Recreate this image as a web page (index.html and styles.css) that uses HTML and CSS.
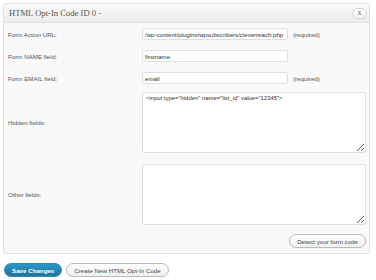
FILE: index.html
```html
<!DOCTYPE html>
<html lang="en">
<head>
  <meta charset="UTF-8">
  <title>HTML Opt-In Code</title>
  <link rel="stylesheet" href="styles.css">
</head>
<body>
  <div class="postbox">
    <div class="postbox-head">
      <h3>HTML Opt-In Code ID 0 -</h3>
      <span class="close-btn">X</span>
    </div>
    <div class="postbox-inside">
      <div class="form-row">
        <label>Form Action URL:</label>
        <div class="field">
          <input type="text" class="text-input" value="/wp-content/plugins/wpsubscribers/cleverreach.php">
          <span class="note">(required)</span>
        </div>
      </div>
      <div class="form-row">
        <label>Form NAME field:</label>
        <div class="field">
          <input type="text" class="text-input" value="firstname">
        </div>
      </div>
      <div class="form-row form-row-last">
        <label>Form EMAIL field:</label>
        <div class="field">
          <input type="text" class="text-input" value="email">
          <span class="note">(required)</span>
        </div>
      </div>
      <div class="form-row form-row-area">
        <label>Hidden fields:</label>
        <div class="field">
          <textarea class="code-area"><input type="hidden" name="list_id" value="12345"></textarea>
        </div>
      </div>
      <div class="form-row">
        <label>Other fields:</label>
        <div class="field">
          <textarea class="code-area"></textarea>
        </div>
      </div>
      <div class="detect-row">
        <button class="button">Detect your form code</button>
      </div>
    </div>
  </div>

  <div class="actions">
    <button class="button button-primary">Save Changes</button>
    <button class="button">Create New HTML Opt-In Code</button>
  </div>
</body>
</html>
```

FILE: styles.css
```css
body {
  margin: 0;
  padding: 3px 6px 0 3px;
  background: #fff;
  font-family: "Liberation Sans", Arial, sans-serif;
  font-size: 6.2px;
  color: #555;
}

.postbox {
  border: 1px solid #dfdfdf;
  border-radius: 3px;
  background: #f9f9f9;
}

.postbox-head {
  display: flex;
  align-items: center;
  justify-content: space-between;
  height: 18px;
  padding: 0 2px 0 5px;
  border-bottom: 1px solid #dfdfdf;
  background: linear-gradient(to bottom, #f9f9f9, #ececec);
}

.postbox-head h3 {
  margin: 0;
  font-family: "Liberation Serif", Georgia, serif;
  font-weight: normal;
  font-size: 8.6px;
  color: #555;
}

.close-btn {
  display: inline-flex;
  align-items: center;
  justify-content: center;
  width: 13px;
  height: 9px;
  border: 1px solid #d4d4d4;
  border-radius: 6px;
  background: linear-gradient(to bottom, #fff, #f0f0f0);
  font-family: "Liberation Serif", Georgia, serif;
  font-size: 6px;
  color: #555;
}

.postbox-inside {
  padding: 5px 3px 5px 4px;
}

.form-row {
  display: grid;
  grid-template-columns: 134px 1fr;
  align-items: center;
  margin-bottom: 10px;
}

.form-row-last {
  margin-bottom: 8px;
}

.form-row-area {
  margin-bottom: 11px;
}

.field {
  display: flex;
  align-items: center;
}

.text-input {
  box-sizing: border-box;
  width: 146px;
  height: 12px;
  margin: 0;
  padding: 0 2px;
  border: 1px solid #dfdfdf;
  border-radius: 2px;
  background: #fff;
  font-family: "Liberation Sans", Arial, sans-serif;
  font-size: 6.1px;
  color: #333;
}

.note {
  margin-left: 5px;
}

.code-area {
  box-sizing: border-box;
  width: 224px;
  height: 61px;
  margin: 0;
  padding: 2px 3px;
  border: 1px solid #dfdfdf;
  border-radius: 2px;
  background: #fff;
  font-family: "Liberation Sans", Arial, sans-serif;
  font-size: 5.9px;
  color: #333;
}

.detect-row {
  display: flex;
  justify-content: flex-end;
  margin-top: -1px;
}

.button {
  height: 14px;
  padding: 0 7px;
  border: 1px solid #bbb;
  border-radius: 8px;
  background: linear-gradient(to bottom, #fefefe, #f0f0f0);
  font-family: "Liberation Sans", Arial, sans-serif;
  font-size: 6.2px;
  color: #464646;
}

.actions {
  display: flex;
  gap: 4px;
  margin-top: 9px;
  margin-left: 1px;
}

.button-primary {
  border-color: #298cba;
  background: linear-gradient(to bottom, #2a95c5, #21759b);
  color: #fff;
  font-weight: bold;
}
```
